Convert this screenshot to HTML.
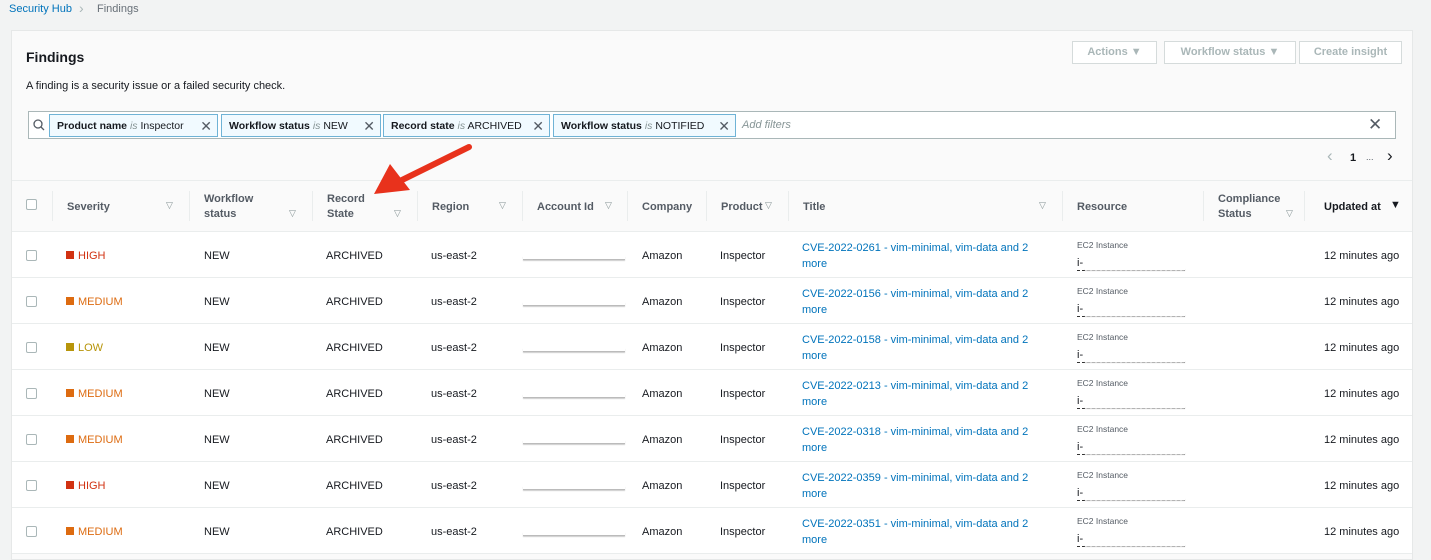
<!DOCTYPE html>
<html><head><style>
*{box-sizing:border-box;margin:0;padding:0}
body{width:1431px;height:551px;overflow:hidden;background:#f2f3f3;font-family:"Liberation Sans",sans-serif;font-size:11px;color:#16191f;position:relative}
.a{position:absolute;white-space:nowrap}
.panel{position:absolute;left:11px;top:30px;width:1402px;height:530px;background:#fafafa;border:1px solid #e6e8e8}
.btn{position:absolute;top:41px;height:23px;border:1px solid #d5dbdb;background:#fff;color:#aab7b8;font-weight:bold;font-size:11px;line-height:21px;text-align:center}
.search{position:absolute;left:28px;top:111px;width:1368px;height:28px;background:#fff;border:1px solid #aab7b8}
.tok{position:absolute;top:114px;height:23px;border:1px solid #6fb3d6;background:#f1faff;line-height:22px;padding-left:7px;font-size:10.5px}
.tok b{font-weight:bold}.tok i{color:#879596}
.tok .x{position:absolute;right:5px;top:0;font-size:14px;color:#545b64}
.thead{position:absolute;left:12px;top:180px;width:1400px;height:52px;background:#fafafa;border-top:1px solid #eaeded;border-bottom:1px solid #eaeded}
.th{position:absolute;font-weight:bold;color:#545b64;font-size:11px;line-height:15px}
.div{position:absolute;top:191px;width:1px;height:30px;background:#eaeded}
.row{position:absolute;left:12px;width:1400px;height:46px;background:#fff;border-bottom:1px solid #eaeded}
.cb{position:absolute;left:26px;width:11px;height:11px;border:1px solid #aab7b8;border-radius:2px;background:#fff}
.tri{color:#879596;font-size:9px}
.link{color:#0073bb}
.sq{display:inline-block;width:8px;height:8px;margin-right:4px}
.blank{position:absolute;height:4px;border-bottom:1px solid #bbb;box-shadow:0 1px 1px #ccc}
</style></head><body>
<div class="a" style="left:9px;top:3px;color:#0073bb">Security Hub</div>
<div class="a" style="left:79px;top:0px;color:#aab7b8;font-size:14px">›</div>
<div class="a" style="left:97px;top:3px;color:#687078">Findings</div>
<div class="panel"></div>
<div class="a" style="left:26px;top:49px;font-size:14px;font-weight:bold">Findings</div>
<div class="a" style="left:26px;top:80px">A finding is a security issue or a failed security check.</div>
<div class="btn" style="left:1072px;width:85px">Actions ▼</div>
<div class="btn" style="left:1164px;width:132px">Workflow status ▼</div>
<div class="btn" style="left:1299px;width:103px">Create insight</div>
<div class="search"></div>
<svg class="a" style="left:33px;top:119px" width="12" height="12"><circle cx="5" cy="5" r="4" fill="none" stroke="#545b64" stroke-width="1.3"/><line x1="8" y1="8" x2="11" y2="11" stroke="#545b64" stroke-width="1.3"/></svg>
<div class="tok" style="left:49px;width:169px"><b>Product name</b> <i>is</i> Inspector<span class="x">✕</span></div>
<div class="tok" style="left:221px;width:160px"><b>Workflow status</b> <i>is</i> NEW<span class="x">✕</span></div>
<div class="tok" style="left:383px;width:167px"><b>Record state</b> <i>is</i> ARCHIVED<span class="x">✕</span></div>
<div class="tok" style="left:553px;width:183px"><b>Workflow status</b> <i>is</i> NOTIFIED<span class="x">✕</span></div>
<div class="a" style="left:742px;top:119px;color:#879596;font-style:italic">Add filters</div>
<div class="a" style="left:1368px;top:115px;font-size:17px;color:#545b64">✕</div>
<div class="a" style="left:1327px;top:146px;font-size:17px;color:#aab7b8">‹</div>
<div class="a" style="left:1350px;top:152px;font-weight:bold">1</div>
<div class="a" style="left:1366px;top:152px;color:#545b64;font-size:9px">...</div>
<div class="a" style="left:1387px;top:146px;font-size:17px;color:#16191f">›</div>
<div class="thead"></div>
<div class="cb" style="top:199px"></div>
<div class="th" style="left:67px;top:200px">Severity</div><div class="a tri" style="left:166px;top:200px">▽</div>
<div class="th" style="left:204px;top:192px">Workflow<br>status</div><div class="a tri" style="left:289px;top:208px">▽</div>
<div class="th" style="left:327px;top:192px">Record<br>State</div><div class="a tri" style="left:394px;top:208px">▽</div>
<div class="th" style="left:432px;top:200px">Region</div><div class="a tri" style="left:499px;top:200px">▽</div>
<div class="th" style="left:537px;top:200px">Account Id</div><div class="a tri" style="left:605px;top:200px">▽</div>
<div class="th" style="left:642px;top:200px">Company</div>
<div class="th" style="left:721px;top:200px">Product</div><div class="a tri" style="left:765px;top:200px">▽</div>
<div class="th" style="left:803px;top:200px">Title</div><div class="a tri" style="left:1039px;top:200px">▽</div>
<div class="th" style="left:1077px;top:200px">Resource</div>
<div class="th" style="left:1218px;top:192px">Compliance<br>Status</div><div class="a tri" style="left:1286px;top:208px">▽</div>
<div class="th" style="left:1324px;top:200px;color:#16191f">Updated at</div><div class="a" style="left:1390px;top:199px;font-size:11px">▼</div>
<div class="div" style="left:52px"></div><div class="div" style="left:189px"></div><div class="div" style="left:312px"></div><div class="div" style="left:417px"></div><div class="div" style="left:522px"></div><div class="div" style="left:627px"></div><div class="div" style="left:706px"></div><div class="div" style="left:788px"></div><div class="div" style="left:1062px"></div><div class="div" style="left:1203px"></div><div class="div" style="left:1304px"></div>

<div id="rows"></div>
<script>
var d=[["HIGH","#d13212","0261"],["MEDIUM","#dd6b10","0156"],["LOW","#b7950b","0158"],["MEDIUM","#dd6b10","0213"],["MEDIUM","#dd6b10","0318"],["HIGH","#d13212","0359"],["MEDIUM","#dd6b10","0351"]];
var h="";
d.forEach(function(r,i){var y=232+i*46,c=y+18;
h+='<div class="row" style="top:'+y+'px"></div>'+
'<div class="cb" style="top:'+(y+18)+'px"></div>'+
'<div class="a" style="left:66px;top:'+c+'px;color:'+r[1]+'"><span class="sq" style="background:'+r[1]+'"></span>'+r[0]+'</div>'+
'<div class="a" style="left:204px;top:'+c+'px">NEW</div>'+
'<div class="a" style="left:326px;top:'+c+'px">ARCHIVED</div>'+
'<div class="a" style="left:431px;top:'+c+'px">us-east-2</div>'+
'<div class="blank" style="left:523px;top:'+(y+24)+'px;width:102px"></div>'+
'<div class="a" style="left:642px;top:'+c+'px">Amazon</div>'+
'<div class="a" style="left:720px;top:'+c+'px">Inspector</div>'+
'<div class="a link" style="left:802px;top:'+(y+9)+'px;line-height:15.5px">CVE-2022-'+r[2]+' - vim-minimal, vim-data and 2<br>more</div>'+
'<div class="a" style="left:1077px;top:'+(y+8)+'px;font-size:8.5px;color:#545b64">EC2 Instance</div>'+
'<div class="a" style="left:1077px;top:'+(y+25)+'px;font-size:11px">i-</div>'+
'<div class="a" style="left:1077px;top:'+(y+38)+'px;width:108px;border-top:1px dashed #333"></div>'+
'<div class="a" style="left:1085px;top:'+(y+36)+'px;width:100px;height:2px;box-shadow:0 1px 1px #ccc"></div>'+
'<div class="a" style="left:1324px;top:'+c+'px">12 minutes ago</div>';});
document.getElementById("rows").innerHTML=h;
</script>
<svg class="a" style="left:0;top:0" width="1431" height="551"><line x1="469" y1="147" x2="400" y2="181" stroke="#e8321c" stroke-width="6" stroke-linecap="round"/><polygon points="374,194 390,164 410,190" fill="#e8321c"/></svg>
</body></html>
